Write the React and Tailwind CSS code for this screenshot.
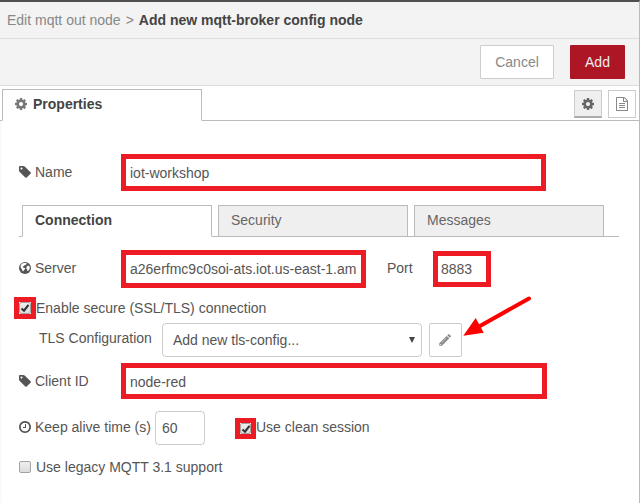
import React from "react";

const PATHS = {
  cog: "M1152 896q0-106-75-181t-181-75-181 75-75 181 75 181 181 75 181-75 75-181zm512-109v222q0 12-8 23t-20 13l-185 28q-19 54-39 91 35 50 107 138 10 12 10 25t-9 23q-27 37-99 108t-94 71q-12 0-26-9l-138-108q-44 23-91 38-16 136-29 186-7 28-36 28h-222q-14 0-24.5-8.5t-11.5-21.5l-28-184q-49-16-90-37l-141 107q-10 9-25 9-14 0-25-11-126-114-165-168-7-10-7-23 0-12 8-23 15-21 51-66.500t54-70.500q-27-50-41-99l-183-27q-13-2-21-12.500t-8-23.500v-222q0-12 8-23t19-13l186-28q14-46 39-92-40-57-107-138-10-12-10-24 0-10 9-23 26-36 98.500-107.500t94.500-71.500q13 0 26 10l138 107q44-23 91-38 16-136 29-186 7-28 36-28h222q14 0 24.500 8.500t11.500 21.500l28 184q49 16 90 37l142-107q9-9 24-9 13 0 25 10 129 119 165 170 7 8 7 22 0 12-8 23-15 21-51 66.500t-54 70.500q26 50 41 98l183 28q13 2 21 12.500t8 23.500z",
  tag: "M576 448q0-53-37.500-90.500t-90.500-37.500-90.500 37.500-37.500 90.500 37.500 90.500 90.500 37.500 90.500-37.500 37.500-90.500zm1067 576q0 53-37 90l-491 492q-39 37-91 37-53 0-90-37l-715-716q-38-37-64.500-101t-26.500-117v-416q0-52 38-90t90-38h416q53 0 117 26.500t102 64.500l715 714q37 39 37 91z",
  file: "M1596 380q28 28 48 76t20 88v1152q0 40-28 68t-68 28h-1344q-40 0-68-28t-28-68v-1600q0-40 28-68t68-28h896q40 0 88 20t76 48zm-444-244v376h376q-10-29-22-41l-313-313q-12-12-41-22zm384 1528v-1024h-416q-40 0-68-28t-28-68v-416h-768v1536h1280zm-1024-864q0-14 9-23t23-9h704q14 0 23 9t9 23v64q0 14-9 23t-23 9h-704q-14 0-23-9t-9-23v-64zm736 224q14 0 23 9t9 23v64q0 14-9 23t-23 9h-704q-14 0-23-9t-9-23v-64q0-14 9-23t23-9h704zm0 256q14 0 23 9t9 23v64q0 14-9 23t-23 9h-704q-14 0-23-9t-9-23v-64q0-14 9-23t23-9h704z",
  clock: "M1024 544v448q0 14-9 23t-23 9h-320q-14 0-23-9t-9-23v-64q0-14 9-23t23-9h224v-352q0-14 9-23t23-9h64q14 0 23 9t9 23zm416 352q0-148-73-273t-198-198-273-73-273 73-198 198-73 273 73 273 198 198 273 73 273-73 198-198 73-273zm224 0q0 209-103 385.500t-279.500 279.500-385.500 103-385.500-103-279.500-279.500-103-385.500 103-385.500 279.500-279.500 385.500-103 385.500 103 279.500 279.500 103 385.500z",
};

function Icon({ name, className = "size-[14px]" }) {
  return (
    <svg viewBox="0 0 1792 1792" fill="currentColor" className={`shrink-0 ${className}`}>
      <path d={PATHS[name]} />
    </svg>
  );
}

function Pencil() {
  return (
    <svg viewBox="0 0 14 14" className="mr-px size-[14px] shrink-0">
      <path d="M1.300 12.700V10.300L8.700 2.900L11.300 5.300L3.900 12.700z" fill="#888" />
      <path d="M9.300 2.300l.8-.7q.9-.7 1.700.1l.7.700q.8.9 0 1.700l-.7.7z" fill="#888" />
      <path d="M3.600 9.800L8.200 5.200" stroke="#ddd" strokeWidth=".7" />
      <path d="M2.200 10.800l1.300 1.200h-1.300z" fill="#fff" />
    </svg>
  );
}

function Globe() {
  return (
    <svg viewBox="0 0 14 14" className="size-[14px] shrink-0">
      <circle cx="7" cy="7" r="6" fill="#555" />
      <path d="M6.500 1.900l1.800.1.5.8-.9.900-1.100.4-.8.900-1.200.5.2.9 1.600.5.7.7-.7 1-1 .8-.3 1.200-1.100-1-.3-1.300-1-1.200-.3-1.400.3-1.600 1.100-1.600z" fill="#fff" />
      <path d="M8.900 5.200l1.400-.7 1.200.9.400 1.300-.6 1.800-1.300 1.500-.8-.2-.1-1.500-.9-1z" fill="#fff" />
    </svg>
  );
}

function Label({ icon, children, className = "" }) {
  return (
    <div className={`flex h-5 shrink-0 items-center ${className}`}>
      <span className="mr-[3px] flex">{icon}</span>
      <span>{children}</span>
    </div>
  );
}

function Check({ checked, size = "size-3" }) {
  return (
    <span className={`flex shrink-0 items-center justify-center rounded-[2px] border border-[#a3a3a3] bg-gradient-to-b from-[#eeeeee] to-[#dcdcdc] ${size}`}>
      {checked && (
        <svg viewBox="0 0 10 10" className="size-[10px] shrink-0">
          <path d="M1.500 5.500L4 7.700L8.500 1.800" fill="none" stroke="#333" strokeWidth="2.100" />
        </svg>
      )}
    </span>
  );
}

function Tab({ children, active }) {
  return (
    <div
      className={`h-8 w-[190px] border border-[#bbb] pl-3 pt-[4px] ${
        active ? "border-b-white bg-white font-bold text-[#444]" : "bg-[#efefef] text-[#666]"
      }`}
    >
      {children}
    </div>
  );
}

export default function App() {
  return (
    <div className="relative flex h-[503px] w-[640px] flex-col overflow-hidden whitespace-nowrap border-r border-t-2 border-r-[#bbb] border-t-[#4f4f4f] bg-white font-['Liberation_Sans',Arial,sans-serif] text-[14px] leading-5 text-[#555]">
      <header className="flex h-[37px] shrink-0 border-b border-[#ddd] bg-[#f3f3f3] pl-[7px] pt-2 text-[#888]">
        <span>Edit mqtt out node</span>
        <span className="ml-[5px]">&gt;</span>
        <span className="ml-[5px] font-bold text-[#444]">Add new mqtt-broker config node</span>
      </header>

      <div className="flex h-[47px] shrink-0 items-start justify-end border-b border-[#ddd] bg-[#f3f3f3] pr-[14px] pt-[6px]">
        <button className="mr-4 h-[34px] w-[74px] rounded-[1px] border border-[#ccc] bg-white text-[#888]">Cancel</button>
        <button className="h-[34px] w-[55px] rounded-[1px] bg-[#ad1625] text-[#eee]">Add</button>
      </div>

      <div className="flex h-[35px] shrink-0 border-b border-[#bbb] pl-[2px] pt-[3px]">
        <div className="flex h-8 w-[200px] items-start border border-b-white border-[#bbb] bg-white pl-[11px] pt-[4px] font-bold text-[#444]">
          <Icon name="cog" className="mr-[5px] mt-[3px] size-[14px] text-[#777]" />
          Properties
        </div>
        <div className="ml-auto mr-[3px] mt-px flex gap-[6px]">
          <div className="flex h-7 w-7 items-center justify-center border border-b-2 border-[#ccc] border-b-[#aaa] bg-[#efefef] text-[#666]">
            <Icon name="cog" />
          </div>
          <div className="flex h-7 w-7 items-center justify-center border border-[#ccc] bg-white text-[#888]">
            <Icon name="file" />
          </div>
        </div>
      </div>

      <main className="flex flex-1 flex-col bg-[linear-gradient(to_right,#f8f8f8,#fff_3px)] pl-[18px]">
        <div className="mt-[33px] flex h-[37px]">
          <Label icon={<Icon name="tag" />} className="mt-2 w-[103px]">Name</Label>
          <div className="h-[37px] w-[425px] border-[5px] border-[#ed1c24] pl-1 pt-1">iot-workshop</div>
        </div>

        <div className="ml-px mr-[20px] mt-[14px] flex h-8 gap-[6px] pl-[3px] bg-[linear-gradient(to_top,#bbb_1px,transparent_1px)]">
          <Tab active>Connection</Tab>
          <Tab>Security</Tab>
          <Tab>Messages</Tab>
        </div>

        <div className="mt-[13px] flex h-[38px]">
          <Label icon={<Globe />} className="mt-2 w-[103px]">Server</Label>
          <div className="h-[38px] w-[245px] overflow-hidden border-[5px] border-[#ed1c24] pl-1 pt-1">a26erfmc9c0soi-ats.iot.us-east-1.am</div>
          <span className="ml-[21px] mt-2 w-[46px]">Port</span>
          <div className="mt-px h-9 w-[58px] border-[5px] border-[#ed1c24] pl-[3px] pt-[3px]">8883</div>
        </div>

        <div className="-ml-1 mt-[9px] flex h-[22px] items-center">
          <span className="flex size-[22px] items-center justify-center border-[5px] border-[#ed1c24]">
            <Check checked />
          </span>
          <span>Enable secure (SSL/TLS) connection</span>
        </div>

        <div className="mt-1 flex h-[34px] pl-[21px]">
          <span className="mt-[5px] w-[123px]">TLS Configuration</span>
          <div className="flex w-[260px] items-center justify-between rounded-[4px] border border-[#ccc] pl-[10px] pr-[6px]">
            <span>Add new tls-config...</span>
            <svg viewBox="0 0 6 6" className="size-[6px]">
              <path d="M0 0h6L3 6z" fill="#444" />
            </svg>
          </div>
          <div className="ml-[7px] flex w-[33px] items-center justify-center rounded-[2px] border border-[#ccc]">
            <Pencil />
          </div>
        </div>

        <div className="mt-[6px] flex h-9">
          <Label icon={<Icon name="tag" />} className="mt-2 w-[103px]">Client ID</Label>
          <div className="h-9 w-[426px] border-[5px] border-[#ed1c24] pl-1 pt-1">node-red</div>
        </div>

        <div className="mt-3 flex h-[34px]">
          <Label icon={<Icon name="clock" />} className="mt-[6px] w-[137px]">Keep alive time (s)</Label>
          <div className="h-[34px] w-[50px] rounded-[4px] border border-[#ccc] pl-[6px] pt-[6px]">60</div>
          <span className="ml-[30px] mt-[7px] flex size-[21px] items-center justify-center border-[5px] border-[#ed1c24]">
            <Check checked size="size-[11px]" />
          </span>
          <span className="mt-[6px]">Use clean session</span>
        </div>

        <div className="mt-3 flex h-5 items-center pl-px">
          <Check />
          <span className="ml-[5px]">Use legacy MQTT 3.1 support</span>
        </div>
      </main>

      <svg viewBox="0 0 70 46" className="absolute left-[462px] top-[292px] h-[46px] w-[70px]">
        <path d="M67 4.500L18 32" stroke="#f00" strokeWidth="4" strokeLinecap="round" />
        <path d="M1.300 41.700L13.700 24L21.700 38.700z" fill="#f00" />
      </svg>
    </div>
  );
}
